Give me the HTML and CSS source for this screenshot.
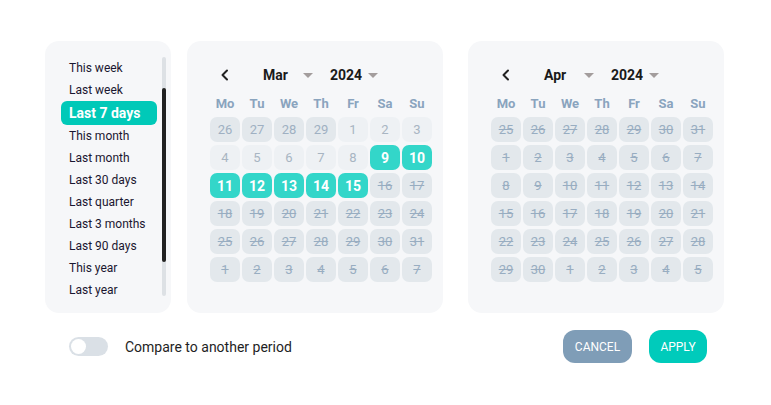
FILE: index.html
```html
<!DOCTYPE html>
<html>
<head>
<meta charset="utf-8">
<link rel="stylesheet" href="styles.css">
</head>
<body>
<div class="picker">
  <div class="top">
    <div class="presets">
      <ul class="list">
        <li>This week</li>
        <li>Last week</li>
        <li class="active">Last 7 days</li>
        <li>This month</li>
        <li>Last month</li>
        <li>Last 30 days</li>
        <li>Last quarter</li>
        <li>Last 3 months</li>
        <li>Last 90 days</li>
        <li>This year</li>
        <li>Last year</li>
      </ul>
      <div class="scroll"><div class="thumb"></div></div>
    </div>

    <div class="cal">
      <div class="head">
        <span class="prev"><svg width="10" height="12" viewBox="0 0 10 12"><path d="M7 1.5 L2.5 6 L7 10.5" fill="none" stroke="#222" stroke-width="2" stroke-linecap="round" stroke-linejoin="round"/></svg></span>
        <span class="sel month">Mar<i class="tri"></i></span>
        <span class="sel year">2024<i class="tri"></i></span>
      </div>
      <div class="grid">
        <span class="wd">Mo</span><span class="wd">Tu</span><span class="wd">We</span><span class="wd">Th</span><span class="wd">Fr</span><span class="wd">Sa</span><span class="wd">Su</span>
        <span class="d out">26</span><span class="d out">27</span><span class="d out">28</span><span class="d out">29</span><span class="d">1</span><span class="d">2</span><span class="d">3</span>
        <span class="d">4</span><span class="d">5</span><span class="d">6</span><span class="d">7</span><span class="d">8</span><span class="d on">9</span><span class="d on">10</span>
        <span class="d on">11</span><span class="d on">12</span><span class="d on">13</span><span class="d on">14</span><span class="d on">15</span><span class="d x">16</span><span class="d x">17</span>
        <span class="d x">18</span><span class="d x">19</span><span class="d x">20</span><span class="d x">21</span><span class="d x">22</span><span class="d x">23</span><span class="d x">24</span>
        <span class="d x">25</span><span class="d x">26</span><span class="d x">27</span><span class="d x">28</span><span class="d x">29</span><span class="d x">30</span><span class="d x">31</span>
        <span class="d x">1</span><span class="d x">2</span><span class="d x">3</span><span class="d x">4</span><span class="d x">5</span><span class="d x">6</span><span class="d x">7</span>
      </div>
    </div>

    <div class="cal">
      <div class="head">
        <span class="prev"><svg width="10" height="12" viewBox="0 0 10 12"><path d="M7 1.5 L2.5 6 L7 10.5" fill="none" stroke="#222" stroke-width="2" stroke-linecap="round" stroke-linejoin="round"/></svg></span>
        <span class="sel month">Apr<i class="tri"></i></span>
        <span class="sel year">2024<i class="tri"></i></span>
      </div>
      <div class="grid">
        <span class="wd">Mo</span><span class="wd">Tu</span><span class="wd">We</span><span class="wd">Th</span><span class="wd">Fr</span><span class="wd">Sa</span><span class="wd">Su</span>
        <span class="d x">25</span><span class="d x">26</span><span class="d x">27</span><span class="d x">28</span><span class="d x">29</span><span class="d x">30</span><span class="d x">31</span>
        <span class="d x">1</span><span class="d x">2</span><span class="d x">3</span><span class="d x">4</span><span class="d x">5</span><span class="d x">6</span><span class="d x">7</span>
        <span class="d x">8</span><span class="d x">9</span><span class="d x">10</span><span class="d x">11</span><span class="d x">12</span><span class="d x">13</span><span class="d x">14</span>
        <span class="d x">15</span><span class="d x">16</span><span class="d x">17</span><span class="d x">18</span><span class="d x">19</span><span class="d x">20</span><span class="d x">21</span>
        <span class="d x">22</span><span class="d x">23</span><span class="d x">24</span><span class="d x">25</span><span class="d x">26</span><span class="d x">27</span><span class="d x">28</span>
        <span class="d x">29</span><span class="d x">30</span><span class="d x">1</span><span class="d x">2</span><span class="d x">3</span><span class="d x">4</span><span class="d x">5</span>
      </div>
    </div>
  </div>

  <div class="bottom">
    <div class="compare">
      <span class="toggle"><span class="knob"></span></span>
      <span class="label">Compare to another period</span>
    </div>
    <div class="actions">
      <button class="btn cancel">CANCEL</button>
      <button class="btn apply">APPLY</button>
    </div>
  </div>
</div>
</body>
</html>
```

FILE: styles.css
```css
* { box-sizing: border-box; }
html, body { margin: 0; padding: 0; background: #fff; }
body {
  font-family: Roboto, "Liberation Sans", Arial, sans-serif;
  width: 771px;
  height: 405px;
  overflow: hidden;
}
.picker {
  padding: 41px 0 0 45px;
  width: 724px;
}
.top {
  display: flex;
  align-items: flex-start;
}
.presets {
  width: 126px;
  height: 272px;
  background: #f6f7f9;
  border-radius: 14px;
  padding: 16px 0 0 16px;
  display: flex;
  align-items: flex-start;
}
.list {
  list-style: none;
  margin: 0;
  padding: 0;
  width: 96px;
}
.list li {
  height: 22px;
  line-height: 23px;
  font-size: 12px;
  color: #1a1630;
  padding-left: 8px;
  white-space: nowrap;
}
.list li.active {
  height: 24px;
  line-height: 24px;
  background: #00c9b8;
  color: #fff;
  font-weight: 700;
  font-size: 14px;
  border-radius: 6px;
}
.scroll {
  margin-left: 5px;
  width: 4px;
  height: 239px;
  border-radius: 2px;
  background: #dde1e5;
  padding-top: 31px;
}
.thumb {
  width: 4px;
  height: 174px;
  background: #222;
  border-radius: 2px;
}
.cal {
  width: 256px;
  height: 272px;
  background: #f6f7f9;
  border-radius: 14px;
  margin-left: 16px;
  padding: 23px 11px 0 23px;
}
.cal + .cal { margin-left: 25px; }
.head {
  display: flex;
  align-items: center;
  height: 22px;
}
.prev {
  width: 30px;
  display: flex;
  justify-content: center;
  align-items: center;
}
.sel {
  display: flex;
  align-items: center;
  justify-content: space-between;
  font-size: 14px;
  font-weight: 700;
  color: #1a1a1a;
}
.month { width: 50px; margin-left: 23px; }
.year { width: 48px; margin-left: 17px; }
.tri {
  width: 0; height: 0;
  border-left: 5px solid transparent;
  border-right: 5px solid transparent;
  border-top: 5px solid #a39d9d;
}
.grid {
  display: grid;
  grid-template-columns: repeat(7, 30px);
  grid-template-rows: 20px;
  grid-auto-rows: 25px;
  column-gap: 2px;
  row-gap: 3px;
  margin-top: 8px;
}
.wd {
  text-align: center;
  font-size: 13px;
  font-weight: 700;
  color: #8aa4be;
  line-height: 20px;
  margin-bottom: 3px;
}
.d {
  display: flex;
  align-items: center;
  justify-content: center;
  font-size: 13px;
  color: #a8b5c2;
  background: #eef1f4;
  border-radius: 7px;
}
.d.out { background: #e3e8ec; color: #9fb0c2; }
.d.x { background: #e3e8ec; color: #98adc1; text-decoration: line-through; }
.d.on { background: #33d6c9; color: #fff; font-weight: 700; font-size: 14px; }
.bottom {
  display: flex;
  justify-content: space-between;
  align-items: center;
  margin-top: 17px;
  padding: 0 17px 0 24px;
}
.compare { display: flex; align-items: center; }
.toggle {
  width: 39px;
  height: 19px;
  border-radius: 10px;
  background: #dae0e6;
  padding: 2px;
  display: flex;
}
.knob {
  width: 15px;
  height: 15px;
  border-radius: 50%;
  background: #fff;
}
.label {
  margin-left: 17px;
  font-size: 14px;
  color: #1e1e24;
}
.actions { display: flex; gap: 17px; }
.btn {
  border: 0;
  height: 33px;
  border-radius: 12px;
  color: #fff;
  font-family: Roboto, "Liberation Sans", Arial, sans-serif;
  font-size: 12px;
  font-weight: 400;
  padding: 0;
}
.cancel { width: 69px; background: #7f9db7; }
.apply { width: 58px; background: #00cbbb; }
```
